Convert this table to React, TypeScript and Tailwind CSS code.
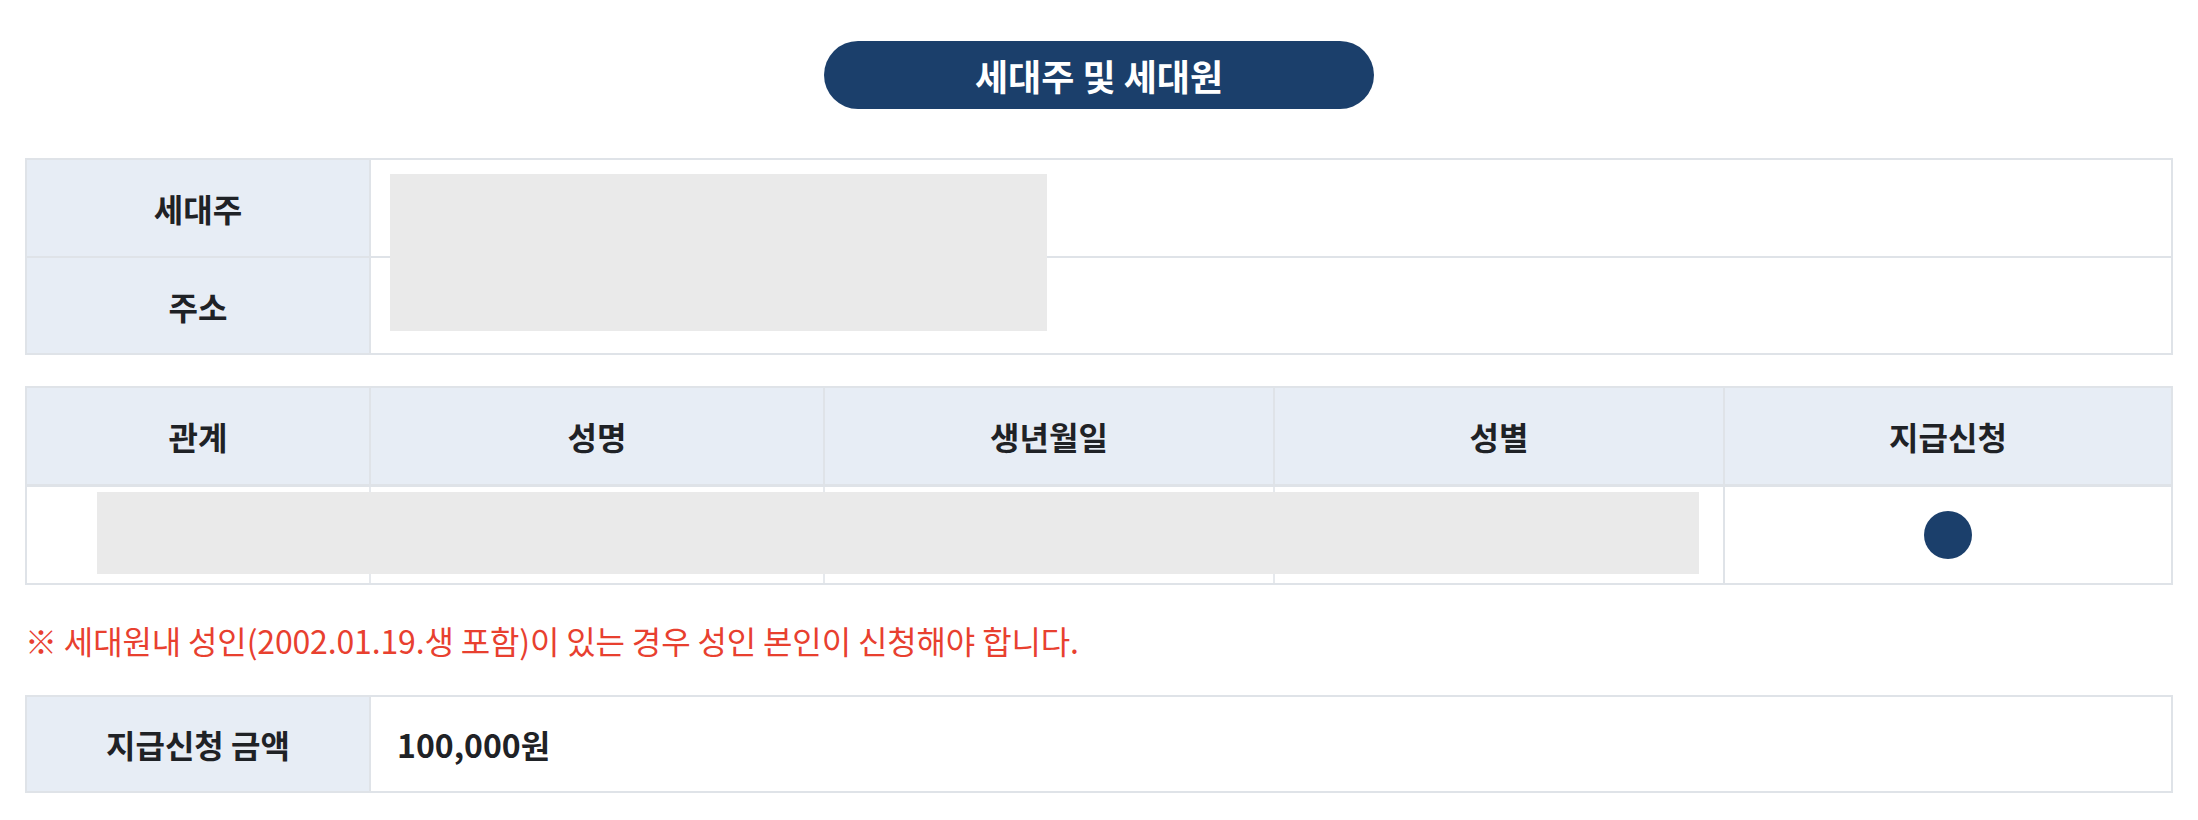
import React from 'react';

const headers = ['관계', '성명', '생년월일', '성별', '지급신청'];

const App = () => {
  return (
    <div className="w-[2198px] h-[820px] bg-white px-[25px] pt-[41px] text-[#1f2226] font-['Noto_Sans_CJK_KR','Noto_Sans',sans-serif]">
      {/* 타이틀 */}
      <div className="flex justify-center">
        <div className="w-[550px] h-[68px] rounded-full bg-[#1b3f6b] text-white text-[36px] font-bold flex items-center justify-center">
          세대주 및 세대원
        </div>
      </div>

      {/* 세대주 / 주소 */}
      <div className="relative mt-[49px] border-2 border-[#dfe3e8]">
        <div className="flex h-[96px]">
          <div className="w-[344px] shrink-0 border-r-2 border-[#dfe3e8] bg-[#e7edf5] flex items-center justify-center text-[32px] font-bold">
            세대주
          </div>
          <div className="flex-1" />
        </div>
        <div className="flex h-[97px] border-t-2 border-[#dfe3e8]">
          <div className="w-[344px] shrink-0 border-r-2 border-[#dfe3e8] bg-[#e7edf5] flex items-center justify-center text-[32px] font-bold">
            주소
          </div>
          <div className="flex-1" />
        </div>
        <div className="absolute left-[363px] top-[14px] w-[657px] h-[157px] bg-[#eaeaea]" />
      </div>

      {/* 세대원 목록 */}
      <div className="relative mt-[31px] border-2 border-[#dfe3e8]">
        <div className="grid grid-cols-[344px_454px_450px_450px_1fr] h-[99px] bg-[#e7edf5] border-b-[3px] border-[#dfe3e8]">
          {headers.map((h, i) => (
            <div
              key={h}
              className={`flex items-center justify-center text-[32px] font-bold ${i < headers.length - 1 ? 'border-r-2 border-[#dfe3e8]' : ''}`}
            >
              {h}
            </div>
          ))}
        </div>
        <div className="grid grid-cols-[344px_454px_450px_450px_1fr] h-[96px]">
          <div className="border-r-2 border-[#e6e9ed]" />
          <div className="border-r-2 border-[#e6e9ed]" />
          <div className="border-r-2 border-[#e6e9ed]" />
          <div className="border-r-2 border-[#dfe3e8]" />
          <div className="flex items-center justify-center">
            <div className="w-[48px] h-[48px] rounded-full bg-[#1b3f6b]" />
          </div>
        </div>
        <div className="absolute left-[70px] top-[104px] w-[1602px] h-[82px] bg-[#eaeaea]" />
      </div>

      <p className="mt-[35px] h-[40px] leading-[40px] text-[32px] tracking-[-0.15px] text-[#e8402f]">
        ※ 세대원내 성인(2002.01.19.생 포함)이 있는 경우 성인 본인이 신청해야 합니다.
      </p>

      {/* 지급신청 금액 */}
      <div className="mt-[35px] flex h-[98px] border-2 border-[#dfe3e8]">
        <div className="w-[344px] shrink-0 border-r-2 border-[#dfe3e8] bg-[#e7edf5] flex items-center justify-center text-[32px] font-bold">
          지급신청 금액
        </div>
        <div className="flex-1 flex items-center pl-[26px] text-[32px] font-bold">100,000원</div>
      </div>
    </div>
  );
};

export default App;
